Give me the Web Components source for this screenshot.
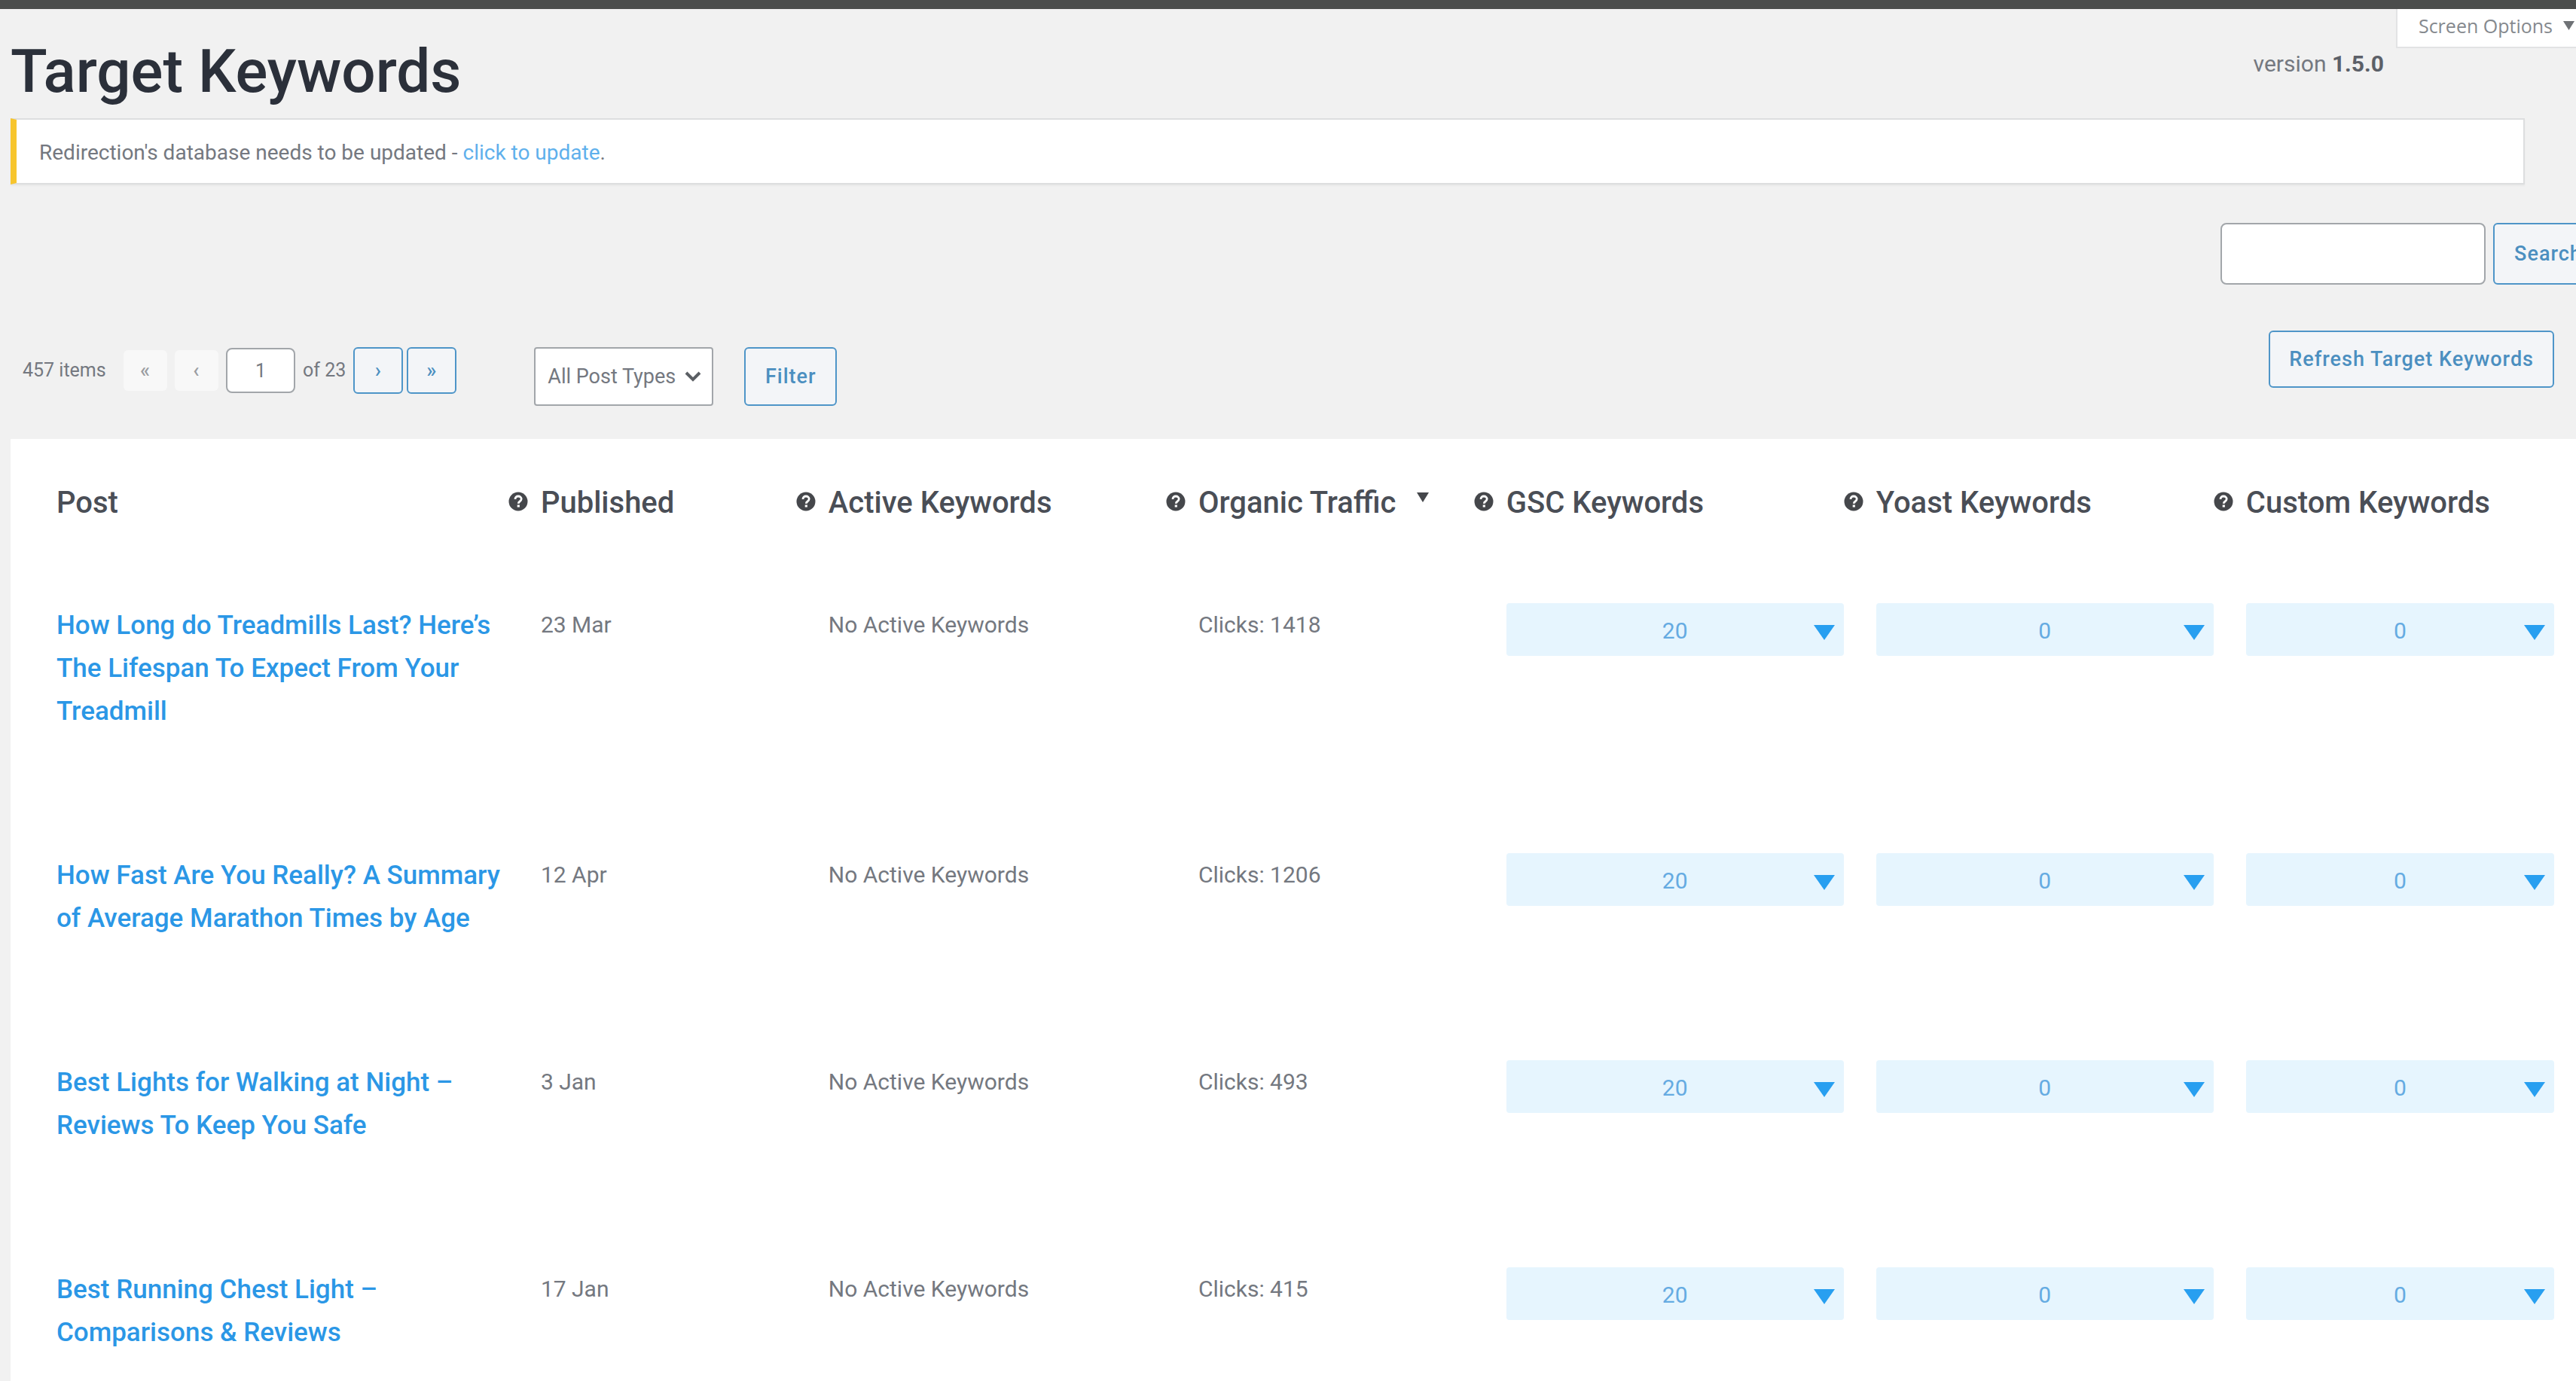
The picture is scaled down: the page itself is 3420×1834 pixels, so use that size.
<!DOCTYPE html>
<html lang="en">
<head>
<meta charset="utf-8">
<meta name="viewport" content="width=device-width, initial-scale=1">
<title>Target Keywords</title>
<style>
  :root {
    --ink: #2b303a;
    --heading: #4a4e56;
    --text: #747880;
    --link: #2b97e6;
    --link-light: #5fb0ec;
    --outline: #4e95c8;
    --field-border: #a2a6aa;
    --page: #f1f1f1;
    --pill: #e6f5fe;
  }

  body {
    margin: 0;
    background: var(--page);
    color: var(--text);
    font-family: Roboto, "Liberation Sans", sans-serif;
    font-size: 28px;
    line-height: 34px;
  }
</style>
</head>
<body>
<admin-page>
  <page-header slot="header" heading="Target Keywords" version="1.5.0"></page-header>
  <admin-notice>Redirection's database needs to be updated - <a href="#update">click to update</a>.</admin-notice>
  <keyword-search></keyword-search>
  <keyword-toolbar total="457" page="1" pages="23"></keyword-toolbar>
  <keyword-table></keyword-table>
</admin-page>

<script>
/**
 * Define a component whose shadow root is filled from its template() method.
 */
class BaseElement extends HTMLElement {
  constructor() {
    super();
    this.attachShadow({ mode: 'open' });
  }

  connectedCallback() {
    this.shadowRoot.innerHTML = this.template();
  }
}

/**
 * Page shell: dark admin bar, header and content.
 */
class AdminPage extends BaseElement {
  template() {
    return `
      <style>
        :host {
          display: flex;
          flex-direction: column;
          box-sizing: border-box;
          height: 100vh;
          overflow: hidden;
          border-top: 12px solid #4b4d4c;
        }
        main {
          padding-left: 14px;
        }
      </style>
      <slot name="header"></slot>
      <main><slot></slot></main>
    `;
  }
}

/**
 * Heading, plugin version and the screen options tab.
 */
class PageHeader extends BaseElement {
  template() {
    return `
      <style>
        :host {
          display: block;
        }
        header {
          display: flex;
          align-items: flex-start;
          padding-left: 14px;
        }
        h1 {
          flex: 1;
          margin: 36px 0 14px;
          color: var(--ink);
          font-size: 80px;
          font-weight: 500;
          line-height: 95px;
        }
        p {
          margin: 56px 16px 0 0;
          font-size: 30px;
        }
        strong {
          color: #5c6068;
          font-weight: 700;
        }
        button {
          display: flex;
          align-items: center;
          gap: 14px;
          height: 52px;
          padding: 0 2px 6px 28px;
          border: 2px solid #e2e3e4;
          border-width: 0 0 2px 2px;
          background: #fff;
          color: #85898e;
          font-family: "Open Sans", "Liberation Sans", sans-serif;
          font-size: 25px;
        }
        svg {
          display: block;
          width: 15px;
          height: 12px;
        }
      </style>
      <header>
        <h1>${this.getAttribute('heading')}</h1>
        <p>version <strong>${this.getAttribute('version')}</strong></p>
        <button type="button" aria-expanded="false">
          Screen Options
          <svg viewBox="0 0 15 12" aria-hidden="true"><path d="M0 0h15L7.500 12z" fill="#6f7276"/></svg>
        </button>
      </header>
    `;
  }
}

/**
 * Warning notice with a yellow edge.
 */
class AdminNotice extends BaseElement {
  template() {
    return `
      <style>
        :host {
          display: block;
          margin-right: 68px;
          padding: 27px 30px 23px;
          border: 2px solid #dddedf;
          border-left: 8px solid #f7c52d;
          background: #fff;
          box-shadow: 0 2px 2px rgba(0, 0, 0, 0.04);
        }
        ::slotted(a) {
          color: var(--link-light);
          text-decoration: none;
        }
      </style>
      <slot></slot>
    `;
  }
}

/**
 * Outlined blue button.
 *
 * @attr {string} label - Accessible name, for buttons that only show an arrow
 */
class OutlineButton extends BaseElement {
  template() {
    const label = this.getAttribute('label');

    return `
      <style>
        :host {
          display: inline-block;
        }
        button {
          display: block;
          box-sizing: border-box;
          width: 100%;
          height: var(--button-height, 78px);
          padding: 0 var(--button-padding, 25px);
          border: 2px solid var(--outline);
          border-radius: 6px;
          background: #f3f5f8;
          color: #4b8fc0;
          font: 500 27px/34px Roboto, "Liberation Sans", sans-serif;
          letter-spacing: 1px;
          white-space: nowrap;
        }
        button:disabled {
          border-color: transparent;
          background: #f8f8f8;
          color: #9a9da1;
        }
      </style>
      <button type="button" ${label ? `aria-label="${label}"` : ''} ${this.hasAttribute('disabled') ? 'disabled' : ''}><slot></slot></button>
    `;
  }
}

/**
 * Search box above the table; its button runs off the right edge of the page.
 */
class KeywordSearch extends BaseElement {
  template() {
    return `
      <style>
        :host {
          display: block;
          margin-top: 51px;
        }
        form {
          display: flex;
          justify-content: flex-end;
          gap: 10px;
          margin-right: -36px;
        }
        input {
          box-sizing: border-box;
          width: 352px;
          height: 82px;
          padding: 0 16px;
          border: 2px solid var(--field-border);
          border-radius: 8px;
          background: #fff;
          font: inherit;
        }
        outline-button {
          --button-height: 82px;
          --button-padding: 22px;
          width: 146px;
        }
      </style>
      <form role="search">
        <input type="search" aria-label="Search keywords">
        <outline-button>Search</outline-button>
      </form>
    `;
  }
}

/**
 * Pagination, post type filter and refresh button.
 */
class KeywordToolbar extends BaseElement {
  template() {
    return `
      <style>
        :host {
          display: flex;
          justify-content: space-between;
          align-items: flex-start;
          padding: 61px 29px 44px 16px;
        }
        nav, form, .pages, .left {
          display: flex;
          align-items: center;
        }
        .left {
          align-items: flex-start;
          gap: 103px;
          margin-top: 22px;
        }
        nav {
          gap: 10px;
          font-size: 25px;
        }
        .total {
          min-width: 124px;
        }
        nav outline-button {
          --button-height: 62px;
          --button-padding: 0;
          width: 66px;
        }
        nav outline-button[disabled] {
          --button-height: 54px;
          width: 58px;
        }
        .pages {
          gap: 5px;
        }
        input, select {
          box-sizing: border-box;
          border: 2px solid var(--field-border);
          border-radius: 8px;
          background: #fff;
          color: var(--text);
          font: inherit;
        }
        input {
          width: 92px;
          height: 60px;
          text-align: center;
        }
        form {
          gap: 41px;
        }
        .select {
          display: grid;
          align-items: center;
        }
        .select > * {
          grid-area: 1 / 1;
        }
        select {
          width: 238px;
          height: 78px;
          padding: 0 48px 0 16px;
          border-radius: 4px;
          appearance: none;
          font-size: 27px;
        }
        svg {
          width: 22px;
          height: 14px;
          justify-self: end;
          margin-right: 16px;
          pointer-events: none;
        }
        form outline-button {
          width: 123px;
        }
        .refresh {
          --button-height: 76px;
        }
      </style>
      <div class="left">
        <nav aria-label="Pagination">
          <span class="total">${this.getAttribute('total')} items</span>
          <outline-button disabled label="First page">«</outline-button>
          <outline-button disabled label="Previous page">‹</outline-button>
          <input type="text" value="${this.getAttribute('page')}" aria-label="Current page">
          <span>of ${this.getAttribute('pages')}</span>
          <span class="pages">
            <outline-button label="Next page">›</outline-button>
            <outline-button label="Last page">»</outline-button>
          </span>
        </nav>
        <form>
          <div class="select">
            <select aria-label="Post type"><option>All Post Types</option></select>
            <svg viewBox="0 0 22 14" aria-hidden="true"><path d="M2 2l9 9 9-9" fill="none" stroke="#5b5f64" stroke-width="4"/></svg>
          </div>
          <outline-button>Filter</outline-button>
        </form>
      </div>
      <outline-button class="refresh">Refresh Target Keywords</outline-button>
    `;
  }
}

/**
 * Round question mark shown before a column heading.
 */
class HelpIcon extends BaseElement {
  template() {
    return `
      <style>
        :host {
          display: block;
          width: 26px;
          height: 26px;
        }
        svg {
          display: block;
        }
      </style>
      <svg width="26" height="26" viewBox="0 0 26 26" aria-hidden="true">
        <circle cx="13" cy="13" r="12.500" fill="#45474b"/>
        <path d="M9 10c0-2.600 1.700-4 4-4s4.200 1.400 4.200 3.600c0 1.800-1 2.600-2.200 3.400-1.200.8-1.700 1.300-1.700 2.700" fill="none" stroke="#fff" stroke-width="2.800"/>
        <rect x="11.700" y="17.500" width="3.200" height="3" fill="#fff"/>
      </svg>
    `;
  }
}

/**
 * Pale blue drop-down holding a keyword count.
 *
 * @attr {string} label - Which keywords are counted
 */
class KeywordCount extends BaseElement {
  template() {
    return `
      <style>
        :host {
          display: block;
        }
        button {
          display: grid;
          align-items: center;
          width: 100%;
          height: 70px;
          padding: 4px 0 0;
          border: 0;
          border-radius: 4px;
          background: var(--pill);
          color: #65abe2;
          font: 400 30px/34px Roboto, "Liberation Sans", sans-serif;
        }
        span, svg {
          grid-area: 1 / 1;
        }
        svg {
          width: 28px;
          height: 20px;
          justify-self: end;
          margin: 4px 12px 0 0;
        }
      </style>
      <button type="button" aria-expanded="false" aria-label="${this.getAttribute('label')}">
        <span><slot></slot></span>
        <svg viewBox="0 0 28 20" aria-hidden="true"><path d="M0 0h28L14 20z" fill="#289ff0"/></svg>
      </button>
    `;
  }
}

const COLUMNS = [
  { title: 'Post', name: 'post' },
  { title: 'Published', name: 'published', help: true },
  { title: 'Active Keywords', name: 'active', help: true },
  { title: 'Organic Traffic', name: 'traffic', help: true, sorted: true },
  { title: 'GSC Keywords', name: 'gsc', help: true },
  { title: 'Yoast Keywords', name: 'yoast', help: true },
  { title: 'Custom Keywords', name: 'custom', help: true }
];

const POSTS = [
  { title: 'How Long do Treadmills Last? Here’s The Lifespan To Expect From Your Treadmill', date: '23 Mar', clicks: 1418 },
  { title: 'How Fast Are You Really? A Summary of Average Marathon Times by Age', date: '12 Apr', clicks: 1206 },
  { title: 'Best Lights for Walking at Night – Reviews To Keep You Safe', date: '3 Jan', clicks: 493 },
  { title: 'Best Running Chest Light – Comparisons &amp; Reviews', date: '17 Jan', clicks: 415 }
];

/**
 * Posts with their keywords.
 */
class KeywordTable extends BaseElement {
  _heading(column) {
    return `
      <th scope="col">
        <div class="heading">
          ${column.help ? '<help-icon></help-icon>' : ''}
          <span>${column.title}</span>
          ${column.sorted ? '<svg class="sort" viewBox="0 0 16 13" aria-hidden="true"><path d="M0 0h16L8 13z" fill="#45474b"/></svg>' : ''}
        </div>
      </th>
    `;
  }

  _row(post) {
    return `
      <tr>
        <td class="title"><a href="#post">${post.title}</a></td>
        <td>${post.date}</td>
        <td>No Active Keywords</td>
        <td>Clicks: ${post.clicks}</td>
        <td><keyword-count label="GSC keywords">20</keyword-count></td>
        <td><keyword-count label="Yoast keywords">0</keyword-count></td>
        <td><keyword-count label="Custom keywords">0</keyword-count></td>
      </tr>
    `;
  }

  template() {
    return `
      <style>
        :host {
          display: block;
          padding: 0 29px 0 18px;
          background: #fff;
        }
        table {
          width: 100%;
          border-collapse: collapse;
          table-layout: fixed;
          font-size: 30px;
          line-height: 57px;
        }
        .post { width: 19.14%; }
        .published { width: 11.37%; }
        .active, .gsc, .yoast { width: 14.62%; }
        .traffic { width: 12.17%; }
        th {
          padding: 55px 0 103px;
          color: var(--heading);
          font-size: 40px;
          font-weight: 500;
          line-height: 60px;
          text-align: left;
          white-space: nowrap;
        }
        th:first-child {
          padding-left: 43px;
        }
        .heading {
          display: flex;
          align-items: center;
        }
        help-icon {
          margin: 0 17px 4px 0;
        }
        .sort {
          width: 16px;
          height: 13px;
          margin: 0 0 16px 28px;
        }
        td {
          padding: 0 0 160px 43px;
          vertical-align: top;
        }
        .title {
          padding-top: 1px;
          font-size: 35px;
          font-weight: 500;
        }
        a {
          color: var(--link);
          text-decoration: none;
        }
      </style>
      <table>
        <colgroup>${COLUMNS.map(column => `<col class="${column.name}">`).join('')}</colgroup>
        <thead><tr>${COLUMNS.map(this._heading).join('')}</tr></thead>
        <tbody>${POSTS.map(this._row).join('')}</tbody>
      </table>
    `;
  }
}

customElements.define('admin-page', AdminPage);
customElements.define('page-header', PageHeader);
customElements.define('admin-notice', AdminNotice);
customElements.define('outline-button', OutlineButton);
customElements.define('keyword-search', KeywordSearch);
customElements.define('keyword-toolbar', KeywordToolbar);
customElements.define('help-icon', HelpIcon);
customElements.define('keyword-count', KeywordCount);
customElements.define('keyword-table', KeywordTable);
</script>
</body>
</html>
